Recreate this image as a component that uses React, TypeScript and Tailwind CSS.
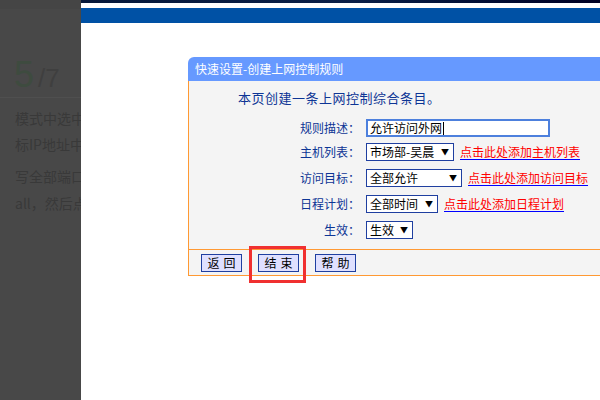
import React from "react";

const CJK = "font-['Noto_Sans_CJK_SC','Liberation_Sans',sans-serif]";

function Select({ label, width }: { label: string; width: string }) {
  return (
    <div
      className={`flex h-[18px] ${width} items-center justify-between border border-[#1f3fa0] bg-white pl-[3px] pr-[4px] text-[12px] leading-none text-black`}
    >
      <span>{label}</span>
      <span className="text-[8px] leading-none">▼</span>
    </div>
  );
}

function Link({ text }: { text: string }) {
  return (
    <span className="ml-[6px] text-[12px] leading-none text-[#ff0000] underline decoration-[#0000ff] underline-offset-[2px]">
      {text}
    </span>
  );
}

function Row({ label, children, className = "" }: { label: string; children: React.ReactNode; className?: string }) {
  return (
    <div className={`flex h-[18px] items-center ${className}`}>
      <div className="w-[173px] pr-[2px] text-right text-[12px] leading-none text-[#0d3595]">{label}：</div>
      <div className="ml-[4px] flex items-center">{children}</div>
    </div>
  );
}

function FootButton({ text }: { text: string }) {
  return (
    <div className="flex h-[18px] w-[41px] items-center justify-center gap-[4px] border border-[#1f3fa0] bg-[#dfe0ff] text-[12px] leading-none text-black">
      {text.split("").map((c, i) => (
        <span key={i}>{c}</span>
      ))}
    </div>
  );
}

export default function App() {
  return (
    <div className={`flex h-[400px] w-[600px] overflow-hidden ${CJK}`}>
      {/* dimmed article on the left */}
      <div className="w-[81px] shrink-0 overflow-hidden whitespace-nowrap bg-[#484848]">
        <div className="h-[9px] bg-[#454545]" />
        <div className="mt-[48px] flex h-[36px] items-baseline border-b border-[#4f4f4f] pb-[4px] pl-[14px] font-['Liberation_Sans',sans-serif] box-content">
          <span className="text-[36px] leading-[36px] text-[#3e4b3f]">5</span>
          <span className="ml-[4px] text-[26px] leading-none text-[#3f3f3f]">/7</span>
        </div>
        <div className="pl-[15px] text-[14px] leading-[20px] text-[#393939]">
          <div className="mt-[10px]">模式中选中</div>
          <div className="mt-[6px]">标IP地址中</div>
          <div className="mt-[12px]">写全部端口</div>
          <div className="mt-[7px]">all，然后点</div>
        </div>
      </div>

      {/* router page */}
      <div className="flex-1 bg-white">
        <div className="h-[3px] bg-gradient-to-r from-[#06183a] via-[#0a1f48] to-[#000020]" />
        <div className="h-[5px] bg-white" />
        <div className="h-[15px] bg-[#0051a5]" />

        <div className="ml-[107px] mt-[34px] w-[440px]">
          <div className="flex h-[24px] items-center rounded-tl-[6px] bg-[#6699ff] pl-[7px] text-[12px] leading-none text-white">
            快速设置-创建上网控制规则
          </div>

          <div className="border-l border-[#ff9933] bg-[#f4f4f4]">
            <div className="pb-[10px] pt-[9px]">
              <div className="pl-[49px] text-[13px] leading-[16px] tracking-[0.5px] text-[#0d3595]">
                本页创建一条上网控制综合条目。
              </div>

              <Row label="规则描述" className="mt-[13px]">
                <div className="flex h-[18px] w-[184px] items-center border-2 border-[#4d80dd] bg-white pl-[2px] text-[12px] leading-none text-black">
                  允许访问外网
                  <span className="ml-[1px] h-[13px] w-px bg-black" />
                </div>
              </Row>
              <Row label="主机列表" className="mt-[6px]">
                <Select label="市场部-吴晨" width="w-[88px]" />
                <Link text="点击此处添加主机列表" />
              </Row>
              <Row label="访问目标" className="mt-[8px]">
                <Select label="全部允许" width="w-[96px]" />
                <Link text="点击此处添加访问目标" />
              </Row>
              <Row label="日程计划" className="mt-[8px]">
                <Select label="全部时间" width="w-[72px]" />
                <Link text="点击此处添加日程计划" />
              </Row>
              <Row label="生效" className="mt-[8px]">
                <Select label="生效" width="w-[47px]" />
              </Row>
            </div>

            <div className="flex gap-[16px] border-y border-[#ff9933] pb-[3px] pl-[12px] pt-[4px]">
              <FootButton text="返回" />
              <div className="relative">
                <FootButton text="结束" />
                <div className="absolute -left-[9px] -top-[8px] h-[37px] w-[57px] border-[3px] border-[#f03030]" />
              </div>
              <FootButton text="帮助" />
            </div>
          </div>
        </div>
      </div>
    </div>
  );
}
